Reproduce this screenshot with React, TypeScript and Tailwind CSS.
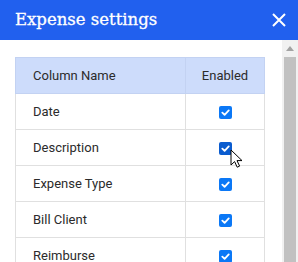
const rows = ["Date", "Description", "Expense Type", "Bill Client", "Reimburse"];

function Check({ hover }: { hover?: boolean }) {
  return (
    <span
      className={
        "inline-flex h-[13px] w-[13px] items-center justify-center rounded-[2px] " +
        (hover ? "bg-[#0a5ccf]" : "bg-[#0b78f6]")
      }
    >
      <svg width="9" height="9" viewBox="0 0 10 10" fill="none">
        <path d="M1.5 5.2 4 7.6 8.6 2.6" stroke="white" strokeWidth="2" strokeLinecap="round" strokeLinejoin="round" />
      </svg>
    </span>
  );
}

export default function App() {
  return (
    <div className="relative flex h-[262px] w-[298px] flex-col overflow-hidden bg-white">
      <header className="flex h-10 flex-none items-center justify-between bg-[#2160ee] pl-[15px] pr-[12px] text-white">
        <h1 className="font-['DejaVu_Serif',serif] text-[16.5px] font-normal leading-none [-webkit-text-stroke:0.3px_white]">Expense settings</h1>
        <svg width="14" height="14" viewBox="0 0 14 14">
          <path d="M1 1 13 13M13 1 1 13" stroke="white" strokeWidth="2" />
        </svg>
      </header>
      <div className="flex min-h-0 flex-1">
        <div className="flex-1 pl-[15px] pr-[17px] pt-[17px]">
          <table className="w-[250px] border-collapse font-['Roboto',sans-serif] text-[13px] text-[#2b2b2b]">
            <thead>
              <tr className="h-[36px] bg-[#cddcfb]">
                <th className="border border-[#c3d2f2] pl-[17px] text-left font-normal">Column Name</th>
                <th className="w-[79px] border border-[#c3d2f2] text-center font-normal">Enabled</th>
              </tr>
            </thead>
            <tbody>
              {rows.map((r, i) => (
                <tr key={r} className="h-[36px]">
                  <td className="border border-[#e0e0e0] pl-[17px]">{r}</td>
                  <td className="border border-[#e0e0e0] text-center leading-none">
                    <span className="inline-block pl-[1px] align-middle">
                      <Check hover={i === 1} />
                    </span>
                  </td>
                </tr>
              ))}
            </tbody>
          </table>
        </div>
        <div className="flex w-[16px] flex-none flex-col bg-[#f1f1f1]">
          <div className="flex h-[17px] items-center justify-center">
            <svg width="8" height="5" viewBox="0 0 8 5">
              <path d="M0 5 4 0 8 5Z" fill="#a3a3a3" />
            </svg>
          </div>
          <div className="mx-[2px] flex-1 bg-[#c1c1c1]" />
        </div>
      </div>
      <svg className="absolute left-[230px] top-[149px]" width="14" height="20" viewBox="0 0 14 20">
        <path d="M1 1v15l3.6-3.4 2.6 5.6 2.4-1.1-2.6-5.5H12Z" fill="white" stroke="black" strokeWidth="1" strokeLinejoin="round" />
      </svg>
    </div>
  );
}
